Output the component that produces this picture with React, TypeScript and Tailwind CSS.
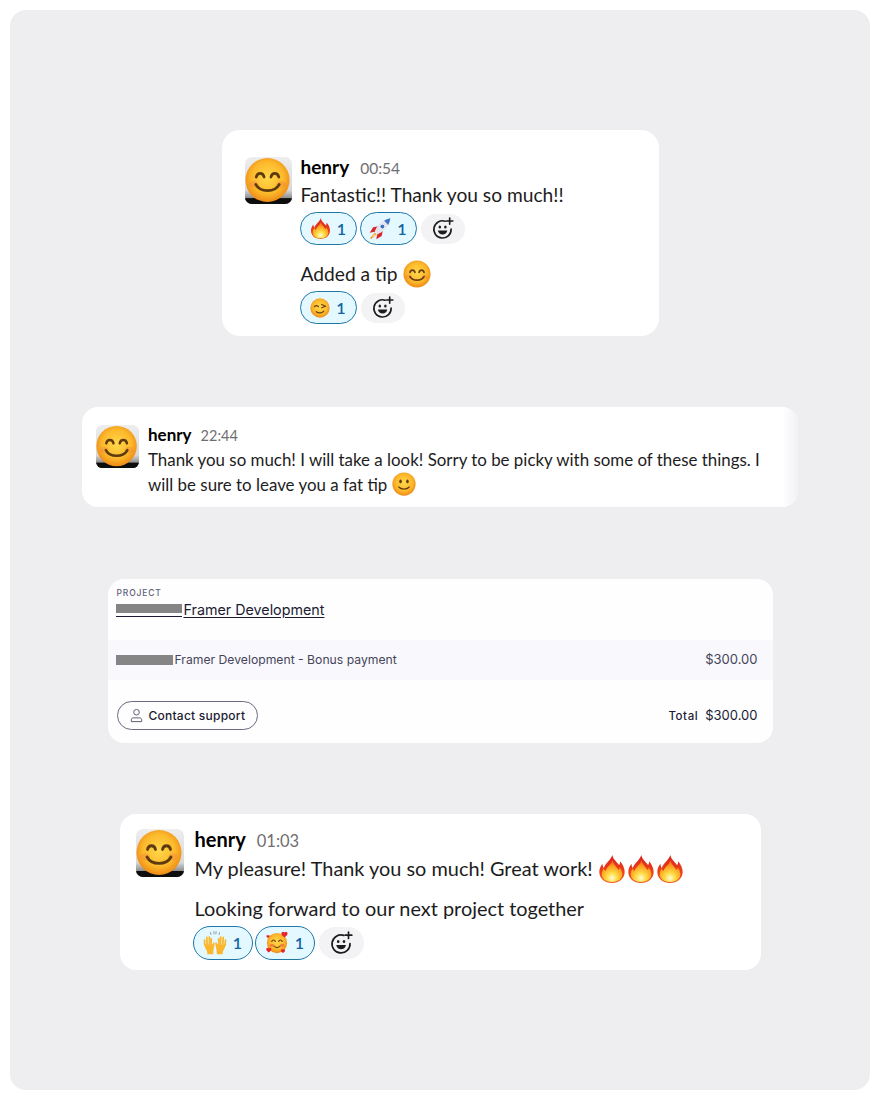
const lato = 'font-["Lato","Noto_Sans",sans-serif]';

const SmileDefs = () => (
  <svg width="0" height="0" className="absolute">
    <defs>
      <radialGradient id="face" cx="50%" cy="45%" r="58%">
        <stop offset="0%" stopColor="#ffd84a" />
        <stop offset="62%" stopColor="#fcb92b" />
        <stop offset="100%" stopColor="#ec8212" />
      </radialGradient>
      <linearGradient id="flame" x1="0" y1="1" x2="0" y2="0">
        <stop offset="0%" stopColor="#f25a1c" />
        <stop offset="100%" stopColor="#de1f1c" />
      </linearGradient>
      <radialGradient id="flamecore" cx="50%" cy="82%" r="72%">
        <stop offset="0%" stopColor="#fffbe0" />
        <stop offset="30%" stopColor="#ffe14d" />
        <stop offset="75%" stopColor="#fca11e" />
        <stop offset="100%" stopColor="#f6701c" />
      </radialGradient>
      <linearGradient id="tile" x1="0" y1="0" x2="0" y2="1">
        <stop offset="0%" stopColor="#eeeeee" />
        <stop offset="70%" stopColor="#d8d8d8" />
        <stop offset="88%" stopColor="#8a8a8a" />
      </linearGradient>
    </defs>
  </svg>
);

const HappyFace = ({ size }: { size: number }) => (
  <svg width={size} height={size} viewBox="0 0 32 32" className="shrink-0">
    <circle cx="16" cy="16" r="15.500" fill="url(#face)" />
    <ellipse cx="6.500" cy="19" rx="3.500" ry="2.400" fill="#f58a3c" opacity=".45" />
    <ellipse cx="25.500" cy="19" rx="3.500" ry="2.400" fill="#f58a3c" opacity=".45" />
    <path d="M8 14.200c.6-3.600 5-3.600 5.600 0M18.400 14.200c.6-3.600 5-3.600 5.600 0" fill="none" stroke="#6b3f12" strokeWidth="2" strokeLinecap="round" />
    <path d="M8 19c3 5.400 13 5.400 16 0" fill="none" stroke="#6b3f12" strokeWidth="2" strokeLinecap="round" />
  </svg>
);

const SlightSmile = ({ size }: { size: number }) => (
  <svg width={size} height={size} viewBox="0 0 32 32" className="shrink-0">
    <circle cx="16" cy="16" r="15.500" fill="url(#face)" />
    <ellipse cx="11.400" cy="12.500" rx="1.700" ry="2.600" fill="#5e3a10" />
    <ellipse cx="20.600" cy="12.500" rx="1.700" ry="2.600" fill="#5e3a10" />
    <path d="M9 20c3 3.600 11 3.600 14 0" fill="none" stroke="#6b3f12" strokeWidth="1.600" strokeLinecap="round" />
  </svg>
);

const Wink = ({ size }: { size: number }) => (
  <svg width={size} height={size} viewBox="0 0 32 32" className="shrink-0">
    <circle cx="16" cy="16" r="15.500" fill="url(#face)" />
    <path d="M7 14c1.800-2.600 4.800-2.600 6.600 0" fill="none" stroke="#6b3f12" strokeWidth="1.900" strokeLinecap="round" />
    <path d="M18.500 10.500l6.500 2.800-6.500 2.200" fill="none" stroke="#6b3f12" strokeWidth="1.900" strokeLinecap="round" strokeLinejoin="round" />
    <path d="M10 22c3 2.800 9 2.600 12-1" fill="none" stroke="#6b3f12" strokeWidth="1.900" strokeLinecap="round" />
  </svg>
);

const Fire = ({ size }: { size: number }) => (
  <svg width={size} height={size} viewBox="0 0 32 32" className="shrink-0">
    <path d="M16.500 0c.5 5 5 7.500 7.500 11.500 1-1 1.300-2.500 1.200-4.500 3.300 3.500 5.300 8 5.300 12.500C30.500 27 24 32 16 32S1.500 27 1.500 19.500c0-4 1.500-7 3.700-9.500-.1 2 .4 3.500 1.500 4.800C8 9.500 14.500 6 16.500 0z" fill="url(#flame)" />
    <path d="M16.800 6c.5 4.500 4.500 7.500 6.700 11 .8-.7 1.200-1.500 1.300-2.700 2 2.500 3 5 3 7.700C27.800 27.500 22.500 30.800 16 30.800S4.200 27.500 4.200 22c0-2.700 1-5 2.600-7 .2 1.500.8 2.500 1.700 3.300C10 13.500 15 11 16.800 6z" fill="url(#flamecore)" />
  </svg>
);

const Rocket = ({ size }: { size: number }) => (
  <svg width={size} height={size} viewBox="0 0 32 32" className="shrink-0">
    <path d="M8.500 20l-7.500 1.500 5-8 7.500-1.500z" fill="#d8262c" />
    <path d="M12 23.500l-1.500 7.500 8-5 1.500-7.500z" fill="#d8262c" />
    <path d="M8.500 20c2-8 10-17 22.500-19.500-2 13-11 21-19 23z" fill="#e2e6ec" />
    <path d="M31 .5c-3.500.7-6.500 2-9 3.500l6 6c1.500-2.500 2.500-6 3-9.500z" fill="#3c74c6" />
    <circle cx="19.500" cy="12.500" r="3.600" fill="#3c74c6" stroke="#f6f7fa" strokeWidth="1.400" />
    <path d="M8.500 21l-6.500 8c-.5 1 .5 1.500 1.500 1l7.500-6z" fill="#f58a1c" />
    <path d="M8.500 22.500l-4 4.500 1.500 1 4-3.500z" fill="#ffdc5d" />
  </svg>
);

const Hands = ({ size }: { size: number }) => (
  <svg width={size} height={size} viewBox="0 0 32 32" className="shrink-0">
    <g stroke="#fbb62b" strokeWidth="2.300" strokeLinecap="round">
      <path d="M2.500 19L2 12M5.500 17L5 8.500M8.500 17L8.500 8M11 18V10.500M13.500 22l1-5.500" />
      <path d="M29.500 19l.5-7M26.500 17l.5-8.500M23.500 17l0-9M21 18V10.500M18.500 22l-1-5.500" />
    </g>
    <path d="M2 17.500h11.500c1 3 1.200 5.500.5 7.500l-.5 6H6l-.7-4.500C3.500 24 2.300 21 2 17.500z" fill="#fbb62b" />
    <path d="M30 17.500H18.500c-1 3-1.200 5.500-.5 7.500l.5 6H26l.7-4.500c1.800-2.500 3-5.500 3.300-9z" fill="#fbb62b" />
    <path d="M10 2l.6 2.700M14.500 .8l.3 3M17.500 .8l-.3 3M22 2l-.6 2.700" stroke="#76808f" strokeWidth="1" strokeLinecap="round" />
  </svg>
);

const Hearts = ({ size }: { size: number }) => (
  <svg width={size} height={size} viewBox="0 0 32 32" className="shrink-0">
    <circle cx="16" cy="16" r="13.500" fill="url(#face)" />
    <ellipse cx="9" cy="19" rx="3" ry="2" fill="#f0534a" opacity=".6" />
    <ellipse cx="23" cy="19" rx="3" ry="2" fill="#f0534a" opacity=".6" />
    <path d="M9 14c.8-2.600 4-2.600 4.800 0M18.200 14c.8-2.600 4-2.600 4.800 0" fill="none" stroke="#6b3f12" strokeWidth="1.500" strokeLinecap="round" />
    <path d="M12 20c2 2.800 6 2.800 8 0" fill="none" stroke="#6b3f12" strokeWidth="1.500" strokeLinecap="round" />
    <path d="M26 2c1.500-1.800 4.500-.6 4 2-.3 1.800-2 3-4 4.500-2-1.500-3.700-2.700-4-4.500-.5-2.600 2.500-3.800 4-2z" fill="#e8262f" />
    <path d="M5 23c1.200-1.500 3.800-.5 3.400 1.700-.3 1.500-1.700 2.500-3.400 3.800-1.700-1.300-3.100-2.300-3.400-3.800C1.200 22.500 3.800 21.500 5 23z" fill="#e8262f" />
    <path d="M24 25c1-1.200 3-.4 2.700 1.300-.2 1.200-1.400 2-2.700 3-1.300-1-2.500-1.800-2.700-3-.3-1.700 1.700-2.500 2.700-1.300z" fill="#e8262f" />
    <path d="M4 6c.8-1 2.500-.3 2.200 1.100-.2 1-1.100 1.600-2.200 2.400C2.900 8.700 2 8.100 1.800 7.100 1.500 5.700 3.200 5 4 6z" fill="#e8262f" />
  </svg>
);

const AddReaction = ({ size }: { size: number }) => (
  <svg width={size} height={size} viewBox="0 0 24 24" className="shrink-0">
    <path d="M14.800 4.400A9 9 0 1 0 21 12.500" fill="none" stroke="#1d1c1d" strokeWidth="1.700" strokeLinecap="round" />
    <ellipse cx="9.200" cy="10.500" rx="1.300" ry="1.600" fill="#1d1c1d" />
    <ellipse cx="15" cy="10.500" rx="1.300" ry="1.600" fill="#1d1c1d" />
    <path d="M7.200 14h9.800c-.4 2.800-2.500 4.300-4.900 4.300S7.600 16.800 7.200 14z" fill="#1d1c1d" />
    <path d="M19.500 1v6.500M16.200 4.200h6.600" stroke="#1d1c1d" strokeWidth="1.700" strokeLinecap="round" />
  </svg>
);

const Avatar = ({ size }: { size: number }) => (
  <svg width={size} height={size} viewBox="0 0 48 48" className="shrink-0">
    <defs>
      <clipPath id="tileclip">
        <rect width="48" height="48" rx="7" />
      </clipPath>
    </defs>
    <g clipPath="url(#tileclip)">
      <rect width="48" height="48" fill="url(#tile)" />
      <rect y="42" width="48" height="6" fill="#0d0d0d" />
    </g>
    <circle cx="23" cy="23.500" r="22.500" fill="url(#face)" />
    <ellipse cx="9" cy="28" rx="5" ry="3.500" fill="#f58a3c" opacity=".45" />
    <ellipse cx="37" cy="28" rx="5" ry="3.500" fill="#f58a3c" opacity=".45" />
    <path d="M11.500 20.500c1-5 7-5 8 0M26.500 20.500c1-5 7-5 8 0" fill="none" stroke="#5e3a10" strokeWidth="2.800" strokeLinecap="round" />
    <path d="M11 28c4.500 8.500 19.500 8.500 24 0" fill="none" stroke="#5e3a10" strokeWidth="2.800" strokeLinecap="round" />
  </svg>
);

const Pill = ({ icon, w, h = "h-[33px]" }: { icon: React.ReactNode; w: string; h?: string }) => (
  <div className={`flex ${w} ${h} items-center justify-center gap-[6px] rounded-full border-[1.5px] border-[#1d78a8] bg-[#e3f8ff] text-[16px] font-semibold text-[#1264a3]`}>
    {icon}
    <span>1</span>
  </div>
);

const AddPill = ({ w, h, size }: { w: string; h: string; size: number }) => (
  <div className={`flex ${w} ${h} items-center justify-center rounded-full bg-[#f3f2f4]`}>
    <AddReaction size={size} />
  </div>
);

export default function App() {
  return (
    <div className="bg-white p-[10px]">
      <SmileDefs />
      <div className="flex h-[1080px] flex-col items-center gap-[71px] rounded-[16px] bg-[#eeedef] pt-[120px]">
        {/* first message */}
        <div className={`flex h-[206px] w-[437px] gap-[8px] rounded-[18px] bg-white pl-[23px] pt-[27px] text-[#1d1c1d] ${lato}`}>
          <Avatar size={47} />
          <div>
            <div className="flex h-[20px] items-baseline gap-[11px] pl-px">
              <span className="text-[19px] font-bold leading-[20px] text-black">henry</span>
              <span className="text-[15.500px] text-[#6f6e70]">00:54</span>
            </div>
            <p className="mt-[4px] pl-px text-[19.200px] leading-[28px]">Fantastic!! Thank you so much!!</p>
            <div className="mt-[3px] flex items-center gap-[3px]">
              <Pill w="w-[57px]" icon={<Fire size={21} />} />
              <Pill w="w-[57px]" icon={<Rocket size={22} />} />
              <div className="ml-[1px]">
                <AddPill w="w-[44px]" h="h-[30px]" size={23} />
              </div>
            </div>
            <p className="mt-[14px] flex h-[30px] items-center gap-[5px] pl-px text-[19.200px]">
              Added a tip <HappyFace size={28} />
            </p>
            <div className="mt-[2px] flex items-center gap-[4px]">
              <Pill w="w-[57px]" icon={<Wink size={20} />} />
              <AddPill w="w-[44px]" h="h-[30px]" size={23} />
            </div>
          </div>
        </div>

        {/* second message */}
        <div className={`relative flex h-[100px] w-[716px] gap-[9px] overflow-hidden rounded-[16px] bg-white pl-[14px] pt-[17px] text-[#1d1c1d] ${lato}`}>
          <div className="mt-[1px]">
            <Avatar size={43} />
          </div>
          <div className="mt-[1px] w-[625px]">
            <div className="flex h-[20px] items-baseline gap-[9px]">
              <span className="text-[17px] font-bold leading-[20px] text-black">henry</span>
              <span className="text-[14.500px] text-[#6f6e70]">22:44</span>
            </div>
            <p className="mt-[2px] text-[16.900px] leading-[25px]">
              Thank you so much! I will take a look! Sorry to be picky with some of these things. I will be sure to leave you a fat tip{" "}
              <span className="inline-block align-[-5px]">
                <SlightSmile size={24} />
              </span>
            </p>
          </div>
          <div className="absolute inset-y-0 right-0 w-[16px] bg-gradient-to-r from-white to-[#f3f1f4]" />
        </div>

        {/* invoice */}
        <div className="mt-px flex h-[164px] w-[665px] flex-col rounded-[16px] bg-[#fefefe] font-['Inter',sans-serif] text-[#1b1b33]">
          <div className="h-[61px] pl-[8px] pt-[9px]">
            <p className="pl-px text-[8.500px] font-medium leading-[11px] tracking-[0.1em] text-[#5f5f78]">PROJECT</p>
            <p className="mt-[2px] flex items-start text-[14.300px] leading-[17px]">
              <span className="mt-[3px] flex h-[13px] w-[66px] flex-col justify-between border-b border-[#1b1b33]">
                <span className="h-[9px] w-full bg-[#858585] blur-[0.5px]" />
              </span>
              <span className="ml-[2px] underline underline-offset-2">Framer Development</span>
            </p>
          </div>
          <div className="flex h-[40px] items-center justify-between bg-[#f9f8fd] pl-[8px] pr-[15px] text-[#45455a]">
            <p className="flex items-center text-[12.200px]">
              <span className="h-[10px] w-[57px] bg-[#858585] blur-[0.5px]" />
              <span className="ml-[2px]">Framer Development - Bonus payment</span>
            </p>
            <span className="text-[13px]">$300.00</span>
          </div>
          <div className="flex flex-1 items-center justify-between pl-[9px] pr-[15px] pt-[8px]">
            <div className="flex h-[29px] w-[141px] items-center gap-[5px] rounded-full border border-[#6a6a80] pl-[11px] text-[12px] font-[450] tracking-[0.02em]">
              <svg width="15" height="15" viewBox="0 0 16 16" fill="none" stroke="#55556c" strokeWidth="1">
                <circle cx="8" cy="4.500" r="3" />
                <path d="M2.500 14.500v-2c0-1.200 1-2 2-2h7c1 0 2 .8 2 2v2z" />
              </svg>
              Contact support
            </div>
            <p className="flex items-baseline gap-[7px] text-[13px]">
              <span className="text-[11.500px] font-medium tracking-[0.05em]">Total</span>
              <span>$300.00</span>
            </p>
          </div>
        </div>

        {/* last message */}
        <div className={`flex h-[156px] w-[641px] gap-[11px] rounded-[16px] bg-white pl-[16px] pt-[15px] text-[#1d1c1d] ${lato}`}>
          <Avatar size={48} />
          <div className="-mt-[2px]">
            <div className="flex h-[24px] items-baseline gap-[11px]">
              <span className="text-[20px] font-bold leading-[24px] text-black">henry</span>
              <span className="text-[16.500px] text-[#6f6e70]">01:03</span>
            </div>
            <p className="mt-[3px] flex h-[30px] items-center gap-[1px] text-[19.900px]">
              <span className="mr-[4px]">My pleasure! Thank you so much! Great work!</span>
              <Fire size={28} />
              <Fire size={28} />
              <Fire size={28} />
            </p>
            <p className="mt-[9px] text-[19.900px] leading-[30px]">Looking forward to our next project together</p>
            <div className="-ml-[2px] mt-[3px] flex items-center gap-[2px]">
              <Pill w="w-[60px]" h="h-[34px]" icon={<Hands size={24} />} />
              <Pill w="w-[60px]" h="h-[34px]" icon={<Hearts size={24} />} />
              <div className="ml-[2px]">
                <AddPill w="w-[45px]" h="h-[32px]" size={24} />
              </div>
            </div>
          </div>
        </div>
      </div>
    </div>
  );
}
